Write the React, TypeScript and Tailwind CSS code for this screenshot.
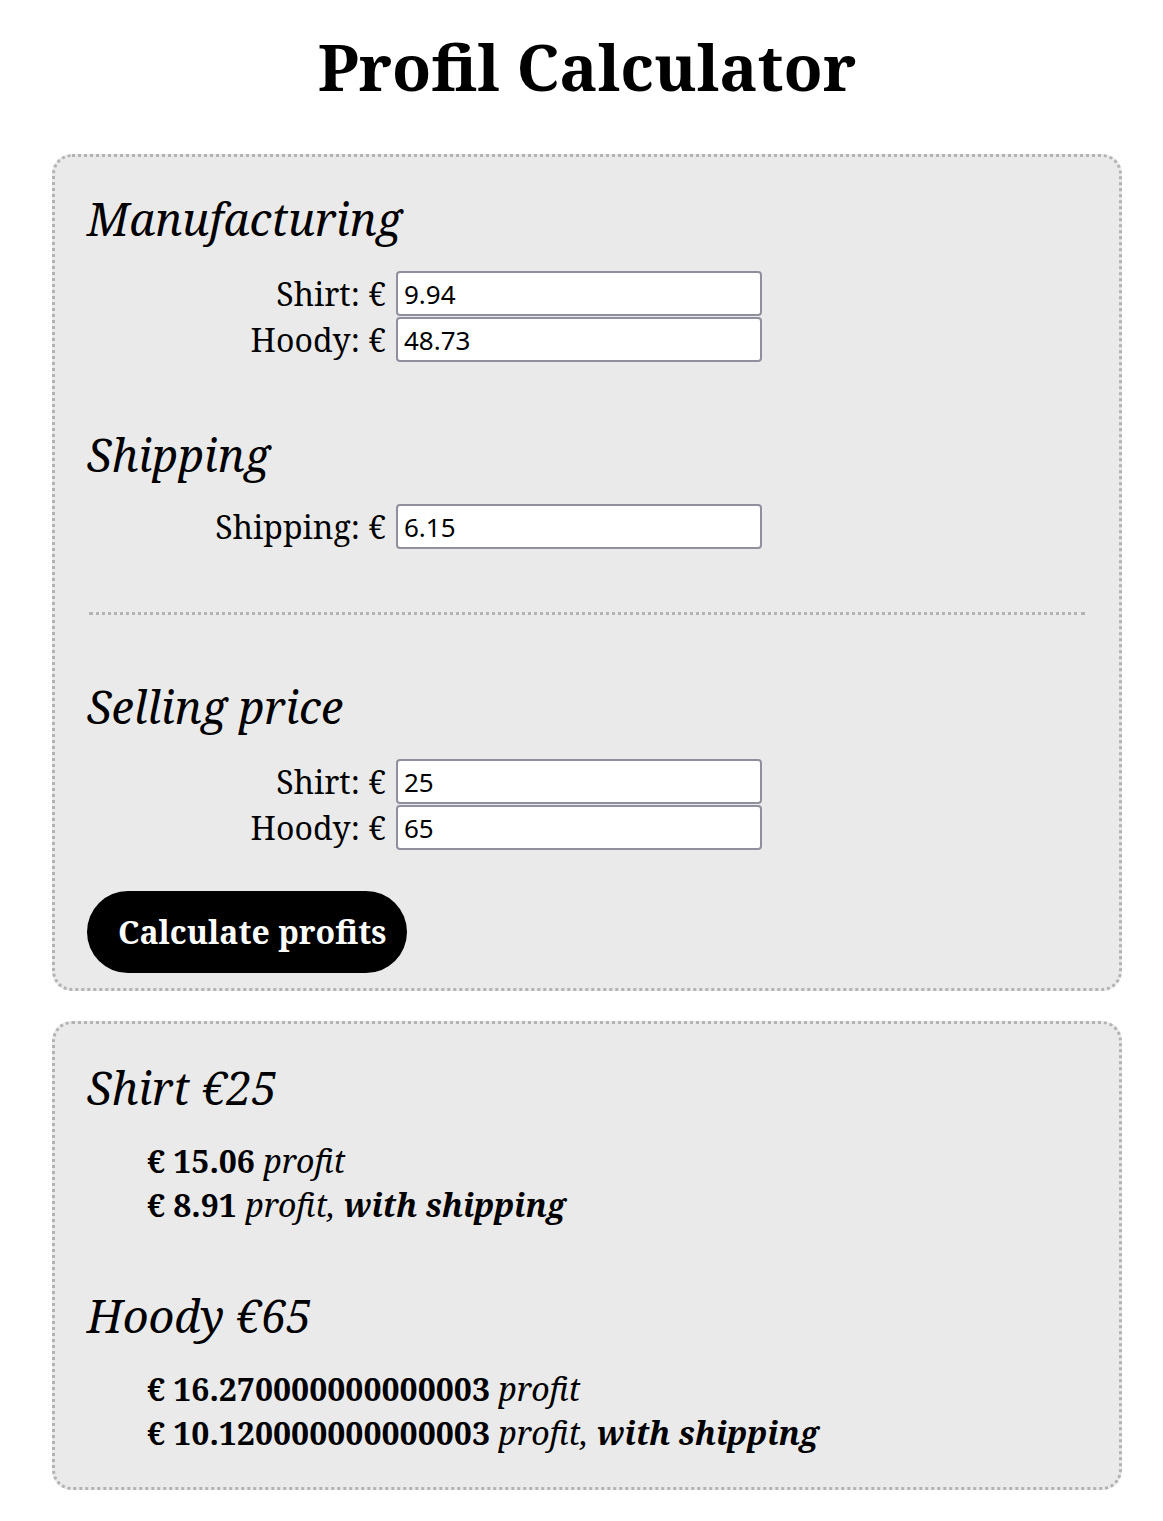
import React from "react";

const Row = ({ label, value }: { label: string; value: string }) => (
  <>
    <label className="text-right pr-[10px] leading-[45px]">{label}</label>
    <input
      defaultValue={value}
      className="h-[45px] w-[366px] bg-white border-2 border-[#8f8f9d] rounded-[4px] px-[6px] text-[26px] font-['Noto_Sans','Open_Sans',sans-serif] text-black"
    />
  </>
);

const Result = ({ title, profit, withShipping }: { title: string; profit: string; withShipping: string }) => (
  <div>
    <h2 className="italic text-[45px] leading-[64px]">{title}</h2>
    <div className="mt-[19px] pl-[60px] text-[32px] leading-[44px]">
      <div>
        <b>€ {profit}</b> <i>profit</i>
      </div>
      <div>
        <b>€ {withShipping}</b> <i>profit,</i> <b className="italic">with shipping</b>
      </div>
    </div>
  </div>
);

export default function App() {
  return (
    <div className="min-h-screen bg-white text-black font-['Noto_Serif','DejaVu_Serif',serif] text-[32px] pl-[52px] pr-[41px] pb-[32px]">
      <h1 className="text-center font-bold text-[64px] leading-[84px] pt-[25px] pb-[45px]">
        Profil Calculator
      </h1>

      <div className="bg-[#eaeaea] border-[3px] border-dotted border-[#b3b3b3] rounded-[20px] px-[32px] pt-[30px] pb-[15px]">
        <h2 className="italic text-[45px] leading-[64px]">Manufacturing</h2>
        <div className="mt-[20px] grid grid-cols-[309px_auto] gap-y-[1px] justify-start">
          <Row label="Shirt: €" value="9.94" />
          <Row label="Hoody: €" value="48.73" />
        </div>

        <h2 className="mt-[61px] italic text-[45px] leading-[64px]">Shipping</h2>
        <div className="mt-[17px] grid grid-cols-[309px_auto] gap-y-[1px] justify-start">
          <Row label="Shipping: €" value="6.15" />
        </div>

        <hr className="mt-[63px] mx-[2px] border-0 border-t-[3px] border-dotted border-[#b3b3b3]" />

        <h2 className="mt-[60px] italic text-[45px] leading-[64px]">Selling price</h2>
        <div className="mt-[20px] grid grid-cols-[309px_auto] gap-y-[1px] justify-start">
          <Row label="Shirt: €" value="25" />
          <Row label="Hoody: €" value="65" />
        </div>

        <button className="mt-[41px] h-[82px] pl-[31px] pr-[20px] rounded-full bg-black text-white font-bold text-[32px]">
          Calculate profits
        </button>
      </div>

      <div className="mt-[30px] bg-[#eaeaea] border-[3px] border-dotted border-[#b3b3b3] rounded-[20px] px-[32px] pt-[32px] pb-[32px] flex flex-col gap-[57px]">
        <Result title="Shirt €25" profit="15.06" withShipping="8.91" />
        <Result title="Hoody €65" profit="16.270000000000003" withShipping="10.120000000000003" />
      </div>
    </div>
  );
}
